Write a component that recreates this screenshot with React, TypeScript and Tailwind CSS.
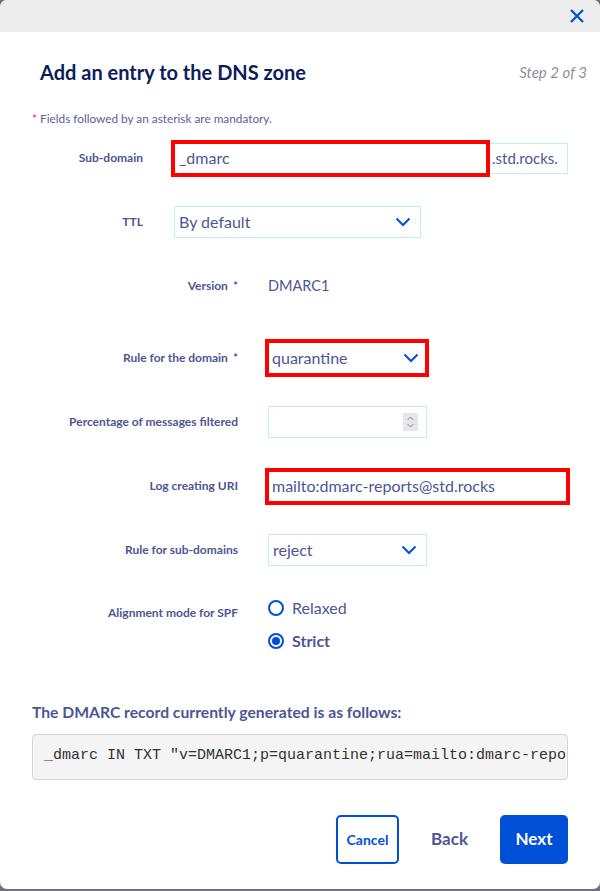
import React from 'react';

const font = { fontFamily: 'Lato, "Open Sans", sans-serif' };

function Chevron() {
  return (
    <svg width="16" height="10" viewBox="0 0 16 10" fill="none" className="shrink-0">
      <path d="M1.5 1.5 8 8l6.5-6.5" stroke="#0050d7" strokeWidth="2" />
    </svg>
  );
}

function Label({ children, width, req }: { children: React.ReactNode; width: string; req?: boolean }) {
  return (
    <div className={`${width} shrink-0 text-right text-[12px] font-bold text-[#4d5694]`}>
      {children}
      {req && <span className="ml-[5px]">*</span>}
    </div>
  );
}

export default function App() {
  return (
    <div className="h-[891px] w-[600px] bg-[#6f7080]" style={font}>
      <div className="flex h-[889px] w-[600px] flex-col overflow-hidden rounded-[7px] bg-white">
        <div className="flex h-[32px] shrink-0 items-center justify-end bg-[#ebeceb] pr-[16px]">
          <svg width="14" height="14" viewBox="0 0 14 14">
            <path d="M1 1l12 12M13 1 1 13" stroke="#0050d7" strokeWidth="2.2" />
          </svg>
        </div>

        <div className="flex items-center justify-between pl-[40px] pr-[13px] pt-[27px]">
          <h1 className="text-[20px] font-bold leading-[26px] text-[#0c1d5b]">Add an entry to the DNS zone</h1>
          <span className="text-[15px] italic text-[#8b8f9b]">Step 2 of 3</span>
        </div>

        <p className="mt-[26px] pl-[32px] text-[11.8px] leading-[16px] text-[#5a6296]">
          <span className="text-[#e5233d]">*</span> Fields followed by an asterisk are mandatory.
        </p>

        <div className="-mt-[1px] flex flex-col pl-[32px]">
          <div className="flex h-[64px] items-center">
            <Label width="w-[111px]">Sub-domain</Label>
            <div className="ml-[28px] flex items-center">
              <div className="flex h-[37px] w-[319px] items-center border-4 border-[#ff0000] pl-[4px] text-[16px] text-[#4d5694]">
                _dmarc
              </div>
              <div className="flex h-[31px] w-[78px] items-center border border-l-0 border-[#bdf0f7] pl-[2px] text-[15px] text-[#4d5694]">
                .std.rocks.
              </div>
            </div>
          </div>

          <div className="flex h-[64px] items-center">
            <Label width="w-[111px]">TTL</Label>
            <div className="ml-[31px] flex h-[32px] w-[247px] items-center justify-between border border-[#bdf0f7] pl-[4px] pr-[9px] text-[16px] text-[#4d5694]">
              By default
              <Chevron />
            </div>
          </div>

          <div className="flex h-[64px] items-center">
            <Label width="w-[206px]" req>Version</Label>
            <div className="ml-[30px] text-[14.5px] text-[#4d5694]">DMARC1</div>
          </div>

          <div className="mt-[8px] flex h-[64px] items-center">
            <Label width="w-[206px]" req>Rule for the domain</Label>
            <div className="ml-[27px] flex h-[38px] w-[164px] items-center justify-between border-4 border-[#ff0000] pl-[3px] pr-[6px] text-[16px] text-[#4d5694]">
              quarantine
              <Chevron />
            </div>
          </div>

          <div className="flex h-[64px] items-center">
            <Label width="w-[206px]">Percentage of messages filtered</Label>
            <div className="ml-[30px] flex h-[32px] w-[159px] items-center justify-end border border-[#bdf0f7] pr-[8px]">
              <div className="flex h-[18px] w-[15px] flex-col items-center justify-center bg-[#e5e5ea]">
                <svg width="9" height="14" viewBox="0 0 9 14" fill="none">
                  <path d="M1.5 5 4.5 2l3 3M1.5 9l3 3 3-3" stroke="#8a8a95" strokeWidth="1" />
                </svg>
              </div>
            </div>
          </div>

          <div className="flex h-[64px] items-center">
            <Label width="w-[206px]">Log creating URI</Label>
            <div className="ml-[27px] flex h-[37px] w-[305px] items-center border-4 border-[#ff0000] pl-[3px] text-[16px] text-[#4d5694]">
              mailto:dmarc-reports@std.rocks
            </div>
          </div>

          <div className="flex h-[64px] items-center">
            <Label width="w-[206px]">Rule for sub-domains</Label>
            <div className="ml-[30px] flex h-[32px] w-[159px] items-center justify-between border border-[#bdf0f7] pl-[4px] pr-[9px] text-[16px] text-[#4d5694]">
              reject
              <Chevron />
            </div>
          </div>

          <div className="mt-[14px] flex items-start">
            <div className="pt-[8px]">
              <Label width="w-[206px]">Alignment mode for SPF</Label>
            </div>
            <div className="ml-[30px] flex flex-col gap-[9px] text-[16px] text-[#4d5694]">
              <div className="flex items-center gap-[8px]">
                <span className="h-[16px] w-[16px] rounded-full border-2 border-[#0050d7]" />
                Relaxed
              </div>
              <div className="flex items-center gap-[8px] font-bold">
                <span className="flex h-[16px] w-[16px] items-center justify-center rounded-full border-2 border-[#0050d7]">
                  <span className="h-[8px] w-[8px] rounded-full bg-[#0050d7]" />
                </span>
                Strict
              </div>
            </div>
          </div>
        </div>

        <div className="px-[32px] pt-[48px]">
          <h2 className="text-[15.7px] font-bold text-[#4d5694]">The DMARC record currently generated is as follows:</h2>
          <div className="mt-[9px] flex h-[46px] items-center overflow-hidden whitespace-nowrap rounded-[4px] border border-[#d4d4d4] bg-[#f4f4f4] pl-[11px] text-[15px] text-[#333]" style={{ fontFamily: '"Liberation Mono", monospace' }}>
            _dmarc IN TXT "v=DMARC1;p=quarantine;rua=mailto:dmarc-reports@std.rocks;aspf=s"
          </div>
        </div>

        <div className="flex items-center justify-end px-[32px] pt-[35px]">
          <button className="h-[49px] w-[63px] rounded-[5px] border-2 border-[#0050d7] text-[14px] font-bold text-[#0050d7]">
            Cancel
          </button>
          <button className="ml-[32px] h-[49px] px-[0px] text-[17px] font-bold text-[#4d5694]">Back</button>
          <button className="ml-[32px] h-[49px] w-[68px] rounded-[5px] bg-[#0050d7] text-[17px] font-bold text-white">
            Next
          </button>
        </div>
      </div>
    </div>
  );
}
